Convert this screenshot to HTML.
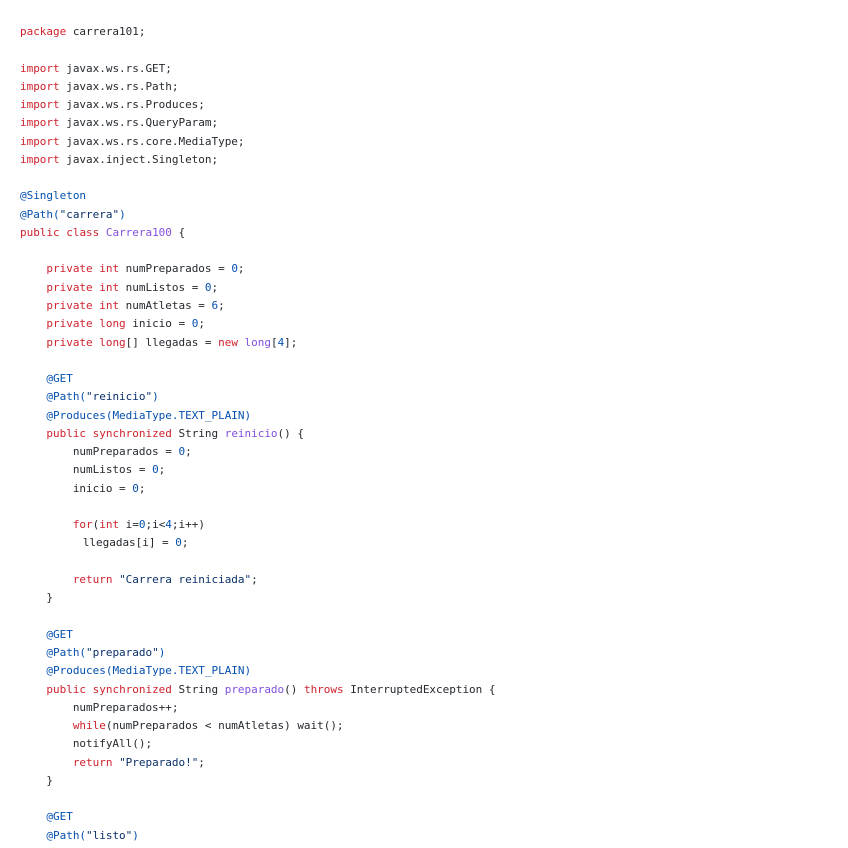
<!DOCTYPE html>
<html><head><meta charset="utf-8"><style>
html,body{margin:0;background:#fff;}
pre{margin:0;padding:23px 0 0 20px;font-family:"DejaVu Sans Mono","Liberation Mono",monospace;font-size:11px;line-height:18.27px;color:#24292f;letter-spacing:-0.02px;}
.k{color:#cf222e}.a{color:#0550ae}.n{color:#0550ae}.c{color:#8250df}.s{color:#0a3069}
</style></head><body><pre><span class="k">package</span> carrera101;

<span class="k">import</span> javax.ws.rs.GET;
<span class="k">import</span> javax.ws.rs.Path;
<span class="k">import</span> javax.ws.rs.Produces;
<span class="k">import</span> javax.ws.rs.QueryParam;
<span class="k">import</span> javax.ws.rs.core.MediaType;
<span class="k">import</span> javax.inject.Singleton;

<span class="a">@Singleton</span>
<span class="a">@Path(<span class="s">"carrera"</span>)</span>
<span class="k">public</span> <span class="k">class</span> <span class="c">Carrera100</span> {

    <span class="k">private</span> <span class="k">int</span> numPreparados = <span class="n">0</span>;
    <span class="k">private</span> <span class="k">int</span> numListos = <span class="n">0</span>;
    <span class="k">private</span> <span class="k">int</span> numAtletas = <span class="n">6</span>;
    <span class="k">private</span> <span class="k">long</span> inicio = <span class="n">0</span>;
    <span class="k">private</span> <span class="k">long</span>[] llegadas = <span class="k">new</span> <span class="c">long</span>[<span class="n">4</span>];

    <span class="a">@GET</span>
    <span class="a">@Path(<span class="s">"reinicio"</span>)</span>
    <span class="a">@Produces(MediaType.TEXT_PLAIN)</span>
    <span class="k">public</span> <span class="k">synchronized</span> String <span class="c">reinicio</span>() {
        numPreparados = <span class="n">0</span>;
        numListos = <span class="n">0</span>;
        inicio = <span class="n">0</span>;

        <span class="k">for</span>(<span class="k">int</span> i=<span class="n">0</span>;i&lt;<span class="n">4</span>;i++)
        <span style="padding-left:10px">llegadas[i] = <span class="n">0</span>;</span>

        <span class="k">return</span> <span class="s">"Carrera reiniciada"</span>;
    }

    <span class="a">@GET</span>
    <span class="a">@Path(<span class="s">"preparado"</span>)</span>
    <span class="a">@Produces(MediaType.TEXT_PLAIN)</span>
    <span class="k">public</span> <span class="k">synchronized</span> String <span class="c">preparado</span>() <span class="k">throws</span> InterruptedException {
        numPreparados++;
        <span class="k">while</span>(numPreparados &lt; numAtletas) wait();
        notifyAll();
        <span class="k">return</span> <span class="s">"Preparado!"</span>;
    }

    <span class="a">@GET</span>
    <span class="a">@Path(<span class="s">"listo"</span>)</span>
</pre></body></html>
